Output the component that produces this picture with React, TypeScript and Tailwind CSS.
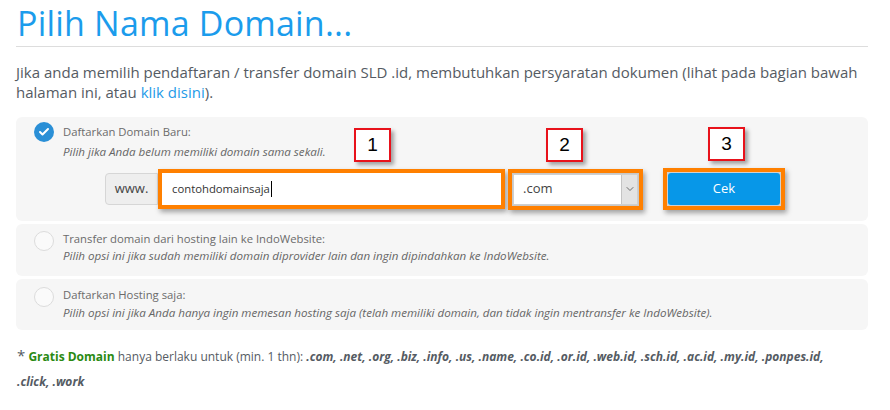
import { Check, ChevronDown } from 'lucide-react';

function Tag({ n, className }: { n: string; className: string }) {
  return (
    <div
      className={`absolute w-[37px] h-[34px] bg-white border-2 border-[#e8121b] flex items-center justify-center text-[19px] text-black shadow-[3px_3px_4px_rgba(0,0,0,0.35)] ${className}`}
      style={{ fontFamily: 'Arial, "Liberation Sans", sans-serif' }}
    >
      {n}
    </div>
  );
}

function Radio() {
  return <span className="mt-[1px] w-[20px] h-[20px] shrink-0 rounded-full border border-[#dcdcdc] bg-[#fafafa]" />;
}

const tlds = '.com, .net, .org, .biz, .info, .us, .name, .co.id, .or.id, .web.id, .sch.id, .ac.id, .my.id, .ponpes.id,';

export default function App() {
  return (
    <div className="w-[890px] h-[410px] bg-white overflow-hidden px-4" style={{ fontFamily: '"Open Sans", sans-serif' }}>
      <div className="w-[852px]">
        {/* Title */}
        <h1
          className="pt-[3px] pl-[1px] text-[34px] leading-[40px] font-normal tracking-[0.2px] text-[#1b9cec]"
          style={{ fontFamily: '"Open Sans", sans-serif' }}
        >
          Pilih Nama Domain...
        </h1>
        <div className="mt-[3px] h-px bg-[#dddddd]" />

        <p className="mt-[15px] text-[15px] leading-[20px] text-[#555b63]">
          Jika anda memilih pendaftaran / transfer domain SLD .id, membutuhkan persyaratan dokumen (lihat pada bagian bawah halaman ini, atau <span className="text-[#1f9be8]">klik disini</span>).
        </p>

        <div className="mt-[15px] flex flex-col gap-[3px]">
          {/* Option 1 */}
          <div className="relative rounded-[6px] bg-[#f6f6f6] pl-[18px] pt-[5px] pb-[11px] flex gap-[9px]">
            <span className="w-[20px] h-[20px] shrink-0 rounded-full bg-[#2a8fd6] flex items-center justify-center">
              <Check size={12} strokeWidth={4} className="text-white" />
            </span>
            <div className="flex-1">
              <div className="text-[11.3px] leading-[20px] text-[#6b6b6b]">Daftarkan Domain Baru:</div>
              <div className="text-[11.6px] leading-[20px] italic text-[#666]">Pilih jika Anda belum memiliki domain sama sekali.</div>
              <div className="mt-[6px] ml-[42px] flex items-center">
                <div className="h-[32px] w-[53px] flex items-center justify-center rounded-l-[4px] border border-[#d6d6d6] bg-[#eeeeee] text-[13px] text-[#444]">
                  www.
                </div>
                <div className="w-[347px] h-[40px] border-[4px] border-[#ff8000] bg-white shadow-[2px_3px_5px_rgba(0,0,0,0.35)] flex items-center">
                  <span className="pl-[10px] text-[11.3px] text-[#333]">contohdomainsaja</span>
                  <span className="ml-[1px] w-px h-[16px] bg-black" />
                </div>
                <div className="ml-[3px] w-[135px] h-[41px] border-[4px] border-[#ff8000] bg-[#c8c8c8] shadow-[2px_3px_5px_rgba(0,0,0,0.35)] p-[1px]">
                  <div className="h-full flex bg-white border border-[#cfcfcf]">
                    <span className="flex-1 flex items-center pl-[9px] text-[13px] text-[#444]">.com</span>
                    <span className="w-[16px] flex items-center justify-center bg-[#e3e3e3] border-l border-[#c4c4c4]">
                      <ChevronDown size={12} strokeWidth={1.5} className="text-[#444]" />
                    </span>
                  </div>
                </div>
                <div className="ml-[20px] w-[122px] h-[42px] border-[4px] border-[#ff8000] bg-[#d0d0d0] shadow-[2px_3px_5px_rgba(0,0,0,0.35)] p-[1px]">
                  <div className="h-full rounded-[3px] bg-[#0797e8] flex items-center justify-center text-[13px] text-white">
                    Cek
                  </div>
                </div>
              </div>
            </div>
            <Tag n="1" className="left-[338px] top-[11px]" />
            <Tag n="2" className="left-[530px] top-[11px]" />
            <Tag n="3" className="left-[692px] top-[10px]" />
          </div>

          {/* Option 2 */}
          <div className="rounded-[6px] bg-[#f6f6f6] pl-[18px] pt-[6px] pb-[12px] flex gap-[9px]">
            <Radio />
            <div>
              <div className="text-[11.3px] leading-[17px] text-[#6b6b6b]">Transfer domain dari hosting lain ke IndoWebsite:</div>
              <div className="text-[11.6px] leading-[17px] italic text-[#666]">Pilih opsi ini jika sudah memiliki domain diprovider lain dan ingin dipindahkan ke IndoWebsite.</div>
            </div>
          </div>

          {/* Option 3 */}
          <div className="rounded-[6px] bg-[#f6f6f6] pl-[18px] pt-[7px] pb-[8px] flex gap-[9px]">
            <Radio />
            <div>
              <div className="text-[11.3px] leading-[18px] text-[#6b6b6b]">Daftarkan Hosting saja:</div>
              <div className="text-[11.6px] leading-[18px] italic text-[#666]">Pilih opsi ini jika Anda hanya ingin memesan hosting saja (telah memiliki domain, dan tidak ingin mentransfer ke IndoWebsite).</div>
            </div>
          </div>
        </div>

        {/* Footnote */}
        <p className="mt-[13px] pl-[1px] text-[12px] leading-[25px] text-[#555b63]">
          <span className="text-[15px]">*</span> <b className="text-[#2a8a12]">Gratis Domain</b> hanya berlaku untuk (min. 1 thn): <b><i>{tlds}</i></b>
          <br />
          <b><i>.click, .work</i></b>
        </p>
      </div>
    </div>
  );
}
